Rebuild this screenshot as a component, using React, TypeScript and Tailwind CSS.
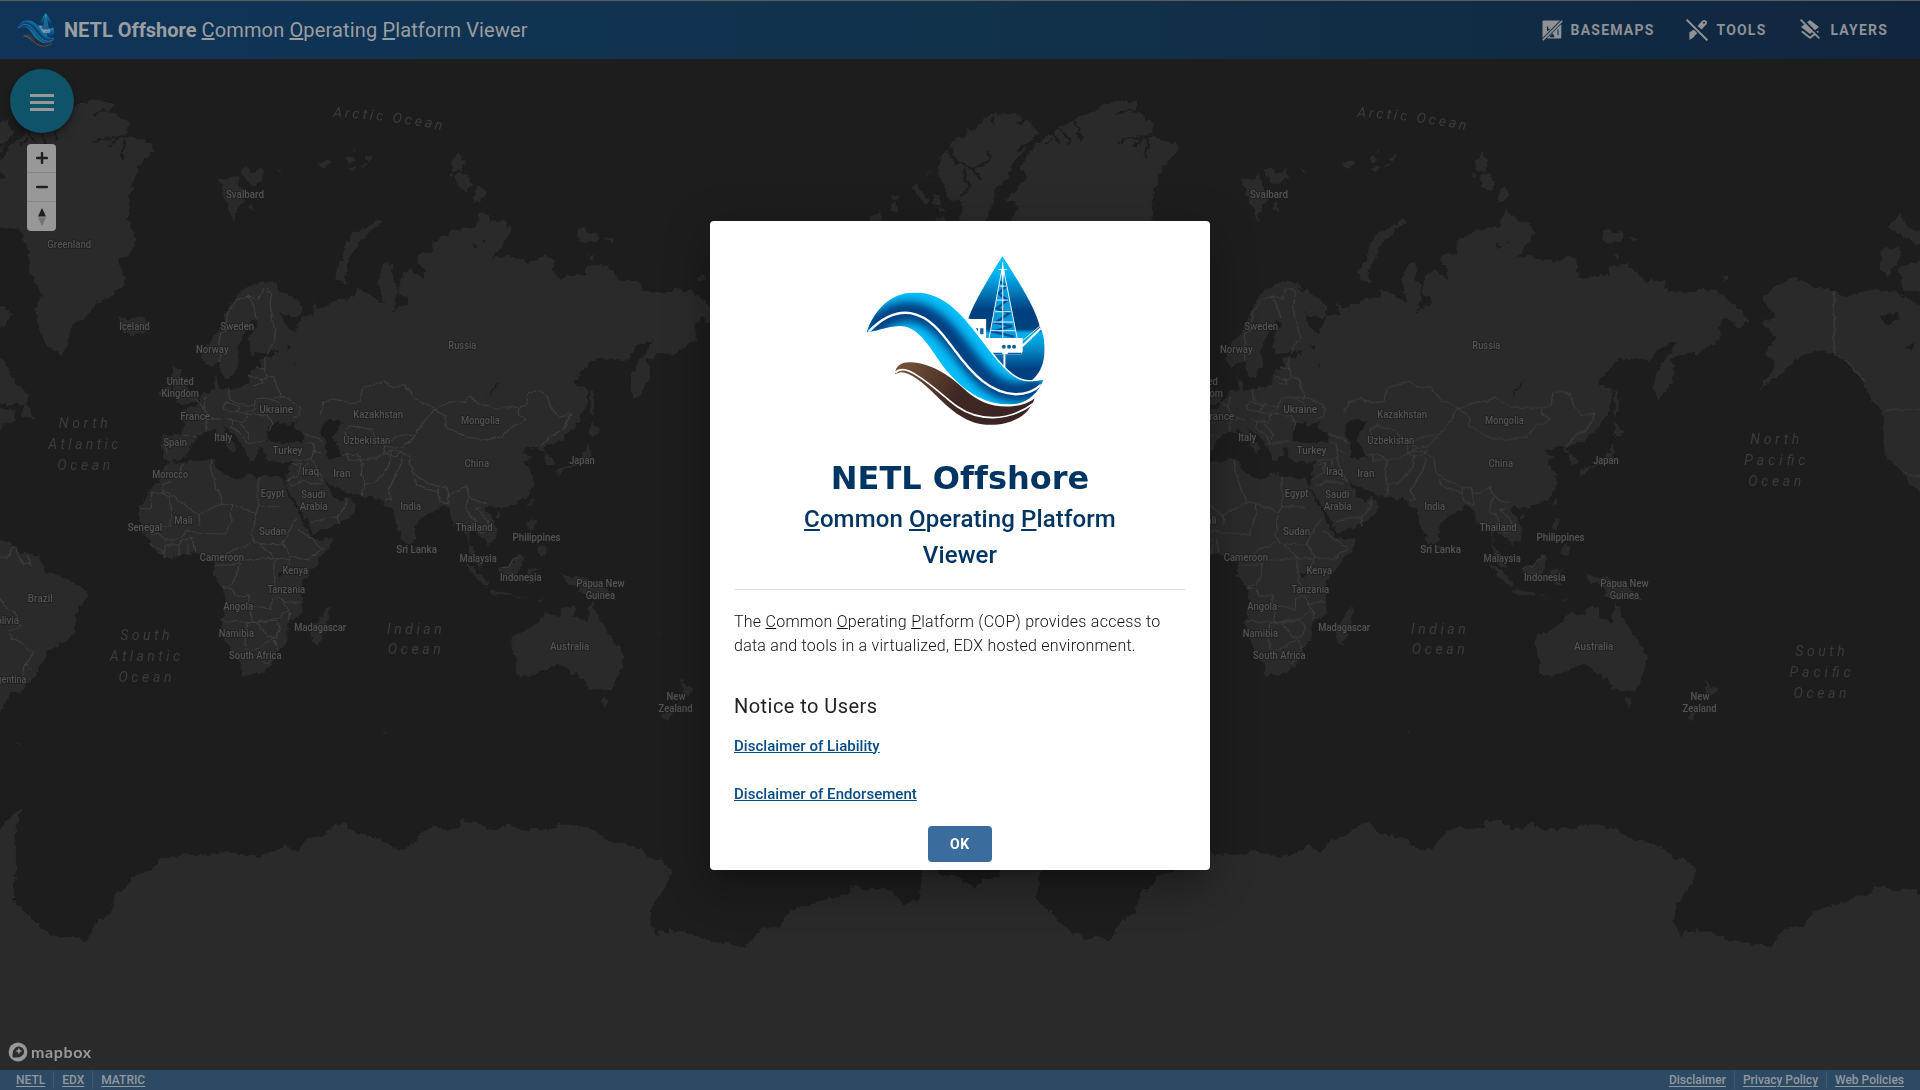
import React from "react";
import { MdLayersClear } from "react-icons/md";

/* ---------- map data: x is in 1/2.2085 px, y in 1/3 px below the header ---------- */

const UX = 0.45281;
const WORLD = 1024;

const LAND = [
  // Greenland
  "M-42 420L10 350L-9 320L28 250L65 215L109 180L153 155L180 130L205 120L250 130L245 155L288 190L275 225L335 250L340 270L305 320L290 380L282 470L298 540L290 580L262 600L275 665L265 690L215 730L185 780L160 790L155 830L140 888L110 865L90 820L78 750L95 710L68 640L60 560L40 505L0 498L-30 480L-10 440Z",
  // Iceland, Svalbard, Arctic islands
  "M263 770L285 778L315 768L330 790L325 808L297 828L270 815Z",
  "M482 355L505 360L520 345L530 380L540 420L525 440L517 485L500 430L488 395Z",
  "M530 330L545 322L560 340L580 325L582 355L560 378L540 360Z",
  "M548 440L562 458L558 425Z",
  "M703 312L722 300L732 305L720 318L712 330ZM762 300L775 288L785 302L770 310ZM765 325L785 318L778 335ZM795 315L812 308L800 325ZM808 295L822 282L822 298L812 306ZM775 268L782 266L780 276ZM612 330L622 330L618 336Z",
  "M1013 278L1025 305L1018 335L1000 335L995 305Z",
  "M1005 345L1030 340L1040 370L1030 395L1010 380ZM988 345L998 340L996 354Z",
  "M1058 375L1073 405L1060 420L1042 430Z",
  "M838 478L845 488L815 515L790 550L775 590L762 630L760 650L770 668L745 660L740 635L755 600L765 550L785 515L810 505Z",
  "M1278 508L1290 505L1300 520L1320 515L1322 540L1300 548L1280 545ZM1335 530L1358 542L1350 550ZM1298 582L1312 585L1310 597ZM1537 655L1555 645L1558 658L1545 662Z",
  // Eurasia
  "M460 920L447 900L452 860L480 820L497 770L510 730L530 695L570 665L605 668L612 690L645 705L670 740L665 770L640 772L618 755L632 800L650 818L655 800L668 770L695 765L690 722L703 750L745 720L790 710L785 683L805 695L847 728L835 660L850 610L868 612L865 650L878 680L872 740L860 765L880 740L900 735L898 710L880 705L885 650L905 625L935 660L938 630L922 605L922 585L955 580L955 545L1000 510L1050 500L1065 448L1085 480L1115 488L1128 515L1110 555L1085 598L1120 585L1165 605L1190 600L1198 585L1220 600L1225 640L1238 662L1250 645L1295 645L1293 620L1325 615L1350 630L1370 662L1415 665L1420 692L1470 700L1495 685L1530 695L1571 740L1601 775L1581 808L1551 770L1533 800L1540 840L1515 855L1490 882L1455 880L1430 900L1437 940L1420 990L1400 1022L1393 985L1395 940L1420 890L1445 840L1405 860L1380 905L1350 895L1310 900L1265 970L1300 990L1295 1040L1270 1100L1240 1140L1197 1162L1215 1190L1225 1205L1222 1215L1208 1215L1205 1180L1185 1160L1155 1170L1160 1185L1175 1190L1155 1205L1175 1240L1178 1270L1165 1310L1140 1330L1105 1345L1085 1340L1070 1345L1085 1370L1100 1405L1098 1430L1080 1455L1065 1435L1045 1410L1035 1410L1035 1450L1048 1475L1068 1525L1055 1520L1038 1480L1030 1420L1018 1390L1000 1395L993 1345L975 1335L965 1350L935 1370L917 1400L915 1440L905 1455L890 1445L875 1390L868 1350L850 1340L845 1320L800 1310L770 1300L750 1285L730 1275L716 1258L722 1275L735 1305L755 1325L768 1312L787 1340L775 1370L740 1395L688 1422L685 1400L660 1340L632 1280L635 1240L645 1205L620 1208L585 1198L582 1165L572 1162L570 1185L552 1202L540 1165L515 1120L500 1108L490 1100L520 1160L513 1182L495 1140L475 1110L455 1115L435 1130L420 1160L410 1190L380 1205L360 1195L358 1125L402 1122L408 1080L395 1060L430 1040L455 995L475 990L470 940L488 990L520 985L550 970L555 930L580 920L570 895L605 890L605 870L555 885L550 830L570 790L560 780L535 830L523 870L528 910L510 950L495 955L485 905Z",
  // Britain and Ireland
  "M385 915L400 930L398 960L425 1000L440 1015L425 1028L388 1034L402 1005L385 990L375 960Z",
  "M352 990L375 975L378 1005L354 1015Z",
  // Sakhalin and Japan
  "M1303 990L1312 1000L1313 1045L1310 1070L1305 1060ZM1306 1085L1325 1118L1308 1130L1302 1120Z",
  "M1298 1150L1305 1190L1285 1210L1250 1225L1235 1240L1230 1255L1228 1230L1260 1215L1280 1195L1295 1170Z",
  // South-east Asia
  "M1175 1310L1177 1330L1168 1340ZM1098 1355L1108 1365L1100 1380ZM1172 1375L1183 1378L1178 1410L1165 1405ZM1195 1450L1208 1465L1200 1488L1185 1475ZM915 1455L925 1470L915 1475Z",
  "M1100 1525L1125 1520L1145 1480L1158 1490L1150 1530L1135 1550L1105 1545Z",
  "M1028 1510L1045 1520L1080 1570L1075 1582L1050 1550Z",
  "M1078 1590L1130 1598L1130 1608L1085 1603ZM1190 1620L1205 1610L1192 1626ZM1135 1608L1165 1612L1135 1612Z",
  "M1165 1530L1195 1525L1170 1545L1185 1572L1170 1575Z",
  "M1238 1540L1262 1555L1290 1555L1325 1575L1340 1590L1370 1630L1340 1610L1310 1618L1285 1605L1280 1580L1250 1565Z",
  // Australia, Tasmania, New Zealand
  "M1130 1730L1165 1710L1185 1690L1205 1660L1235 1668L1240 1645L1270 1638L1268 1670L1297 1690L1303 1640L1308 1630L1328 1690L1350 1730L1372 1775L1378 1790L1365 1850L1350 1890L1325 1890L1300 1885L1290 1850L1278 1858L1275 1835L1265 1847L1250 1822L1230 1815L1190 1838L1150 1850L1138 1840L1140 1810L1130 1760Z",
  "M1325 1915L1345 1918L1335 1943Z",
  "M1502 1855L1515 1880L1532 1885L1520 1905L1508 1900ZM1500 1925L1490 1950L1475 1982L1462 1970L1485 1940ZM1447 1712L1458 1725L1452 1722ZM846 2013L854 2020L848 2020Z",
  // Africa and Madagascar
  "M375 1205L400 1210L470 1195L478 1230L500 1245L535 1260L545 1240L570 1250L625 1255L632 1290L655 1345L670 1390L690 1438L733 1435L730 1460L700 1510L670 1560L665 1580L668 1660L635 1690L635 1740L615 1770L600 1815L575 1840L535 1848L528 1810L505 1760L488 1690L500 1630L490 1580L470 1545L475 1510L455 1490L430 1480L400 1485L365 1495L340 1465L315 1420L312 1380L305 1345L325 1300L350 1265L358 1235Z",
  "M725 1640L728 1660L710 1740L700 1757L688 1745L690 1700L708 1670Z",
  // Eastern edge of the Americas
  "M-20 720L0 735L25 762L10 800L-20 790ZM-20 880L0 885L15 920L30 965L62 1000L60 1030L30 1035L-20 1035ZM55 1032L78 1075L45 1070ZM-20 1048L35 1045L35 1085L12 1090L0 1115L-20 1120Z",
  "M-40 1440L0 1443L25 1448L45 1480L88 1490L100 1535L150 1555L190 1590L192 1610L168 1660L165 1720L150 1740L108 1770L78 1850L45 1895L20 1895L20 1915L0 1960L-40 1960Z",
  "M33 2052L38 2048L42 2053L48 2049L44 2054Z",
  // Alaska and western Canada
  "M1656 680L1696 655L1751 680L1821 710L1871 685L1921 695L1990 745L2010 1325L1962 1280L1941 1235L1906 1195L1896 1140L1898 1060L1871 1020L1851 960L1800 885L1751 872L1711 890L1671 940L1626 988L1661 915L1636 880L1661 830L1630 790L1661 770L1631 720Z",
  "M1897 562L1941 570L1931 600L1906 650L1889 630ZM1931 620L1990 600L1990 700L1941 690ZM1908 500L1936 460L1950 500L1990 520L1990 560L1941 530Z",
].join("");

const WATER = [
  "M595 1100L610 1085L630 1095L645 1090L658 1080L648 1100L668 1118L674 1142L630 1150L600 1145L590 1135Z",
  "M708 1100L730 1078L757 1085L745 1112L735 1130L757 1192L740 1197L722 1190L722 1150L708 1122Z",
  "M1102 958L1100 980L1072 1020L1092 985Z",
  "M604 868L616 872L612 885ZM632 852L642 862L634 872ZM650 910L657 914L652 920ZM880 1095L886 1080L884 1092Z",
  "M612 1540L624 1535L622 1553L612 1552ZM1045 550L1055 556L1048 566ZM1066 540L1074 546L1068 550Z",
  "M1890 770L1930 755L1935 775L1905 798ZM1945 860L1970 845L1960 872Z",
].join("");

const INLETS =
  "M208 250L225 235L285 230M262 232L240 262M275 238L268 300M205 165L225 152L248 152M60 215L80 250M75 205L95 225L100 255M45 255L60 235M110 180L128 240";

const BORDERS = [
  "M708 1060L715 1025L740 1015L770 1028L795 1025L800 985L850 962L870 985L895 978L915 1015L930 1025L960 1045L930 1100L915 1125L880 1130L860 1145L835 1145L820 1110L780 1095L765 1105V1130",
  "M960 1045L1000 1025L1025 1028L1035 1010L1050 1022L1070 1035L1100 1045L1145 1042L1145 1065L1165 1078L1130 1100L1110 1130L1075 1140L1025 1130L985 1100L985 1070Z",
  "M1145 1042L1165 1035L1168 1000L1190 990L1208 1005L1215 1040L1235 1068L1260 1062L1245 1110L1220 1125L1195 1160",
  "M485 905L487 820L500 812L505 760L520 725L545 705L560 730L565 775M545 705L572 718L580 685L590 685L600 700L595 740L603 790L610 835L588 880",
  "M585 890L585 930L588 945L607 955L612 985L620 1005L615 1018M565 920L588 930M548 945L575 960L590 950M560 975L578 970L575 955M615 1010L600 1015L565 1015L560 1050L545 1055M620 1010L640 1020L665 1045L662 1065L645 1075",
  "M503 985L508 1020L540 1038L562 1040M490 1040L500 1025L530 1040L520 1055L495 1050ZM520 1055L545 1060L540 1085L515 1085L500 1075M545 1062L590 1065L600 1090L595 1115M515 1085L510 1100L530 1120L545 1150L560 1145L585 1145M530 1090L550 1120L548 1140M455 1010L450 1045L470 1075L490 1080M430 1020L452 1045M455 1115L455 1085L475 1070M402 1125L435 1132M365 1140L370 1190",
  "M668 1120L690 1130L705 1135L712 1150M675 1150L690 1150L695 1170L690 1195M690 1170L710 1180M645 1205L690 1195L700 1230L715 1265M645 1215L665 1210L660 1240L635 1265M680 1200L675 1230L690 1240L712 1265M755 1185L790 1182L800 1210L798 1245L805 1275L800 1305",
  "M765 1180L770 1200L800 1200L830 1195L860 1170L880 1175L905 1190M862 1178L860 1215L845 1245L825 1270L803 1272M888 1195L880 1235L855 1290L865 1320L850 1320M835 1145L870 1165L890 1160L915 1130M850 1155L845 1180L875 1190L890 1170",
  "M905 1195L910 1235L925 1255L965 1280L990 1285L990 1300L1010 1295L1030 1280L1035 1305L1060 1330L1075 1330M918 1260L920 1275L968 1298L965 1285M968 1298L972 1325L992 1335L990 1300M1035 1310L1028 1350L1050 1380L1040 1400M1050 1345L1070 1370L1085 1410L1060 1420M1045 1350L1065 1345",
  "M640 1275L670 1265L712 1272M685 1385L745 1370L762 1340L768 1320M745 1370L748 1395",
  "M468 1200L465 1230L475 1270L490 1330L440 1365L360 1290M402 1210L400 1245L360 1275V1300M360 1300H335V1345H308M360 1300L375 1310L378 1400H330M570 1250V1340H622M570 1340L565 1360L512 1330L490 1330M512 1330L510 1380L498 1425L470 1420L440 1420L415 1410L400 1430L385 1440M565 1360L555 1420L565 1450L620 1455L625 1440M440 1365V1395M555 1445L540 1460L515 1470L495 1490M570 1450L595 1480L605 1495L540 1500M655 1375L640 1410L625 1450L640 1490L680 1500L715 1465L690 1440L660 1410M605 1495H640L635 1535M605 1495L605 1560L615 1590L640 1580",
  "M365 1495L355 1470L330 1450M362 1485L365 1455L395 1455L395 1487M395 1460L400 1440L425 1435L430 1480M415 1450V1482M330 1425L350 1420L365 1440L385 1440M475 1515L515 1515V1510L528 1508L525 1545L510 1575L492 1578M492 1580L515 1590L520 1610L550 1605L550 1635L575 1640L600 1650L600 1615L620 1612L630 1630L665 1625M550 1635L555 1685L610 1675L635 1655M488 1682L555 1688L610 1680M545 1690L540 1765L555 1775L580 1755L605 1735M565 1685L590 1725L610 1735L620 1695L608 1680M605 1740L615 1775M580 1800L590 1810L600 1798M620 1612L640 1660L635 1685",
  "M0 1492L15 1495L30 1460M35 1465L50 1515L70 1510M60 1485L70 1515M0 1615L10 1640L35 1660L45 1700L20 1710L25 1735L45 1745L65 1770L75 1780L55 1810L70 1830M48 1850L55 1810",
  "M1100 1525L1125 1520L1135 1495L1150 1493M1789 695V885L1815 900L1858 965M1898 1051H1990M1941 1235L1990 1255M620 1030L600 1018",
].join("");

const ANTARCTICA =
  "M0 205L8 170L20 140L12 200L14 330L10 420L40 520L52 535L60 530L70 543L80 480L90 465L95 390L102 390L110 345L122 335L130 300L150 285L152 272L156 285L183 283L186 270L192 280L210 290L222 280L232 255L243 280L250 240L265 225L275 190L282 190L290 220L310 235L325 275L333 265L345 215L355 200L362 210L375 205L378 172L380 185L388 182L400 210L408 205L415 188L425 212L445 205L448 212L455 195L468 193L485 210L498 245L510 248L525 270L530 295L540 300L549 330L545 370L540 400L532 440L531 490L537 535L540 512L560 515L580 545L600 553L608 565L622 505L637 500L645 450L668 430L680 410L692 405L695 375L705 385L728 392L738 432L744 420L750 428L754 330L750 200L838 200V940H-20V205Z";

type Label = [string, number, number, number];

const COUNTRIES: Label[] = [
  ["Svalbard", 541, 402, 84], ["Greenland", 153, 552, 97], ["Iceland", 297, 798, 67],
  ["Sweden", 524, 798, 74], ["Norway", 469, 868, 72], ["Russia", 1021, 855, 62],
  ["United", 398, 963, 60], ["Kingdom", 398, 999, 83], ["France", 431, 1068, 66],
  ["Ukraine", 610, 1049, 75], ["Kazakhstan", 835, 1063, 110], ["Mongolia", 1061, 1081, 86],
  ["Italy", 493, 1133, 40], ["Spain", 387, 1146, 52], ["Turkey", 635, 1171, 66],
  ["Uzbekistan", 810, 1141, 104], ["China", 1053, 1209, 54], ["Japan", 1285, 1200, 56],
  ["Morocco", 376, 1242, 79], ["Iraq", 686, 1235, 38], ["Iran", 755, 1239, 38],
  ["Egypt", 602, 1300, 52], ["Saudi", 692, 1303, 53], ["Arabia", 693, 1339, 62],
  ["Mali", 405, 1382, 40], ["Senegal", 320, 1402, 76], ["India", 907, 1339, 46],
  ["Thailand", 1047, 1403, 82], ["Sudan", 602, 1414, 60], ["Philippines", 1185, 1433, 106],
  ["Sri Lanka", 920, 1468, 90], ["Cameroon", 490, 1492, 98], ["Malaysia", 1056, 1495, 82],
  ["Kenya", 652, 1530, 56], ["Indonesia", 1150, 1553, 92], ["Tanzania", 632, 1587, 84],
  ["Papua New", 1326, 1571, 107], ["Guinea", 1326, 1607, 65], ["Angola", 526, 1638, 66],
  ["Namibia", 522, 1719, 78], ["Madagascar", 707, 1702, 114], ["Australia", 1258, 1760, 87],
  ["South Africa", 564, 1786, 116], ["New", 1493, 1909, 42], ["Zealand", 1492, 1945, 75],
  ["Brazil", 89, 1615, 55], ["Bolivia", 10, 1680, 64], ["Argentina", 15, 1857, 86],
];

const OCEANS: Label[] = [
  ["North", 184, 1090, 108], ["Atlantic", 184, 1153, 155], ["Ocean", 185, 1217, 117],
  ["South", 320, 1725, 109], ["Atlantic", 320, 1788, 155], ["Ocean", 320, 1852, 117],
  ["Indian", 915, 1707, 121], ["Ocean", 915, 1769, 117],
  ["North", 1658, 1139, 108], ["Pacific", 1658, 1202, 135], ["Ocean", 1658, 1265, 117],
  ["South", 1758, 1774, 109], ["Pacific", 1758, 1838, 135], ["Ocean", 1758, 1901, 117],
];

/* Labels are laid out for both copies of the world; those fully behind the dialog are left out. */
function place(labels: Label[]) {
  return labels.flatMap(([text, cx, cy, w]) =>
    [0, WORLD].flatMap((shift) => {
      const x = cx * UX + shift;
      const y = 60 + cy / 3;
      const half = (w * UX) / 2;
      const covered = y > 215 && y < 870 && x - half > 706 && x + half < 1214;
      return covered || x - half > 1920 ? [] : [{ text, x, y, w: w * UX }];
    }),
  );
}

function WorldMap() {
  return (
    <svg className="absolute inset-0 h-[1090px] w-[1920px]" viewBox="0 0 1920 1090" aria-hidden="true">
      <defs>
        <filter id="coast" filterUnits="userSpaceOnUse" x="-20" y="0" width="1960" height="1090">
          <feTurbulence type="fractalNoise" baseFrequency="0.16" numOctaves="3" seed="4" />
          <feDisplacementMap in="SourceGraphic" scale="7" xChannelSelector="R" yChannelSelector="G" />
        </filter>
        <g id="world">
          <g transform={`translate(0 60) scale(${UX} 0.33333)`}>
            <path d={LAND} fill="#2c2c2b" />
            <path d={WATER} fill="#1d1d1d" />
            <path d={INLETS} fill="none" stroke="#1d1d1d" strokeWidth="5" />
          </g>
          <g transform="translate(-324 80) scale(0.33333)">
            <path
              fill="#2c2c2b"
              d="M1012 155L990 122L940 105L880 98L850 115L830 150L800 146L800 170L765 178L750 200L765 235L790 250L768 258L740 208L720 232L713 290L735 320L745 358L785 362L790 390L770 430L860 430L862 400L880 370L890 320L925 290L940 250L1000 180ZM635 318L650 315L690 370L670 374ZM700 338L720 350L718 374L702 372ZM570 375L590 368L596 388L575 396ZM573 352L592 342L600 356L575 358ZM508 412L540 394L546 420L510 430ZM682 275L690 277L688 295ZM712 380L730 382L735 392L715 392ZM708 412L735 412L735 426L710 426Z"
            />
            <path
              fill="none"
              stroke="#1d1d1d"
              strokeWidth="8"
              d="M745 205L770 245L820 265L865 245L868 212M790 265L795 300L812 320L785 350M820 265L842 300M875 110L885 132M950 130L980 115M950 215L1000 180"
            />
          </g>
          <g transform="translate(0 760) scale(1.22449 0.33333)">
            <path d={ANTARCTICA} fill="#2c2c2b" />
            <path d="M765 320L768 345L780 350L797 388L803 360L815 350L822 368V320Z" fill="#1d1d1d" />
          </g>
        </g>
        <g id="borders" transform={`translate(0 60) scale(${UX} 0.33333)`}>
          <path d={BORDERS} fill="none" stroke="#3e3f40" strokeWidth="2.6" strokeLinejoin="round" />
        </g>
        <filter id="wobble" filterUnits="userSpaceOnUse" x="-20" y="0" width="1960" height="1090">
          <feTurbulence type="fractalNoise" baseFrequency="0.12" numOctaves="2" seed="9" />
          <feDisplacementMap in="SourceGraphic" scale="5" xChannelSelector="R" yChannelSelector="G" />
        </filter>
        <path id="arctic-arc" d="M333 117Q390 119 456 133" />
      </defs>
      <rect width="1920" height="1090" fill="#1d1d1d" />
      <g filter="url(#coast)">
        <use href="#world" />
        <use href="#world" x={WORLD} />
        <rect x="-20" y="1000" width="1960" height="90" fill="#2c2c2b" />
      </g>
      <g filter="url(#wobble)">
        <use href="#borders" />
        <use href="#borders" x={WORLD} />
      </g>
      <g
        fill="#525354"
        stroke="#1f1f1f"
        strokeWidth="1.6"
        paintOrder="stroke"
        fontFamily="Roboto, sans-serif"
        fontSize="10.4"
        fontWeight="500"
        textAnchor="middle"
      >
        {place(COUNTRIES).map((l, i) => (
          <text key={i} x={l.x} y={l.y + 3.7} textLength={l.w} lengthAdjust="spacingAndGlyphs">
            {l.text}
          </text>
        ))}
      </g>
      <g fill="#3a3b3c" fontFamily="Roboto, sans-serif" fontSize="14" fontStyle="italic" textAnchor="middle">
        {place(OCEANS).map((l, i) => (
          <text key={i} x={l.x} y={l.y + 4.5} textLength={l.w}>
            {l.text}
          </text>
        ))}
        {[0, WORLD].map((s) => (
          <text key={s} transform={`translate(${s} 0)`} textAnchor="start" letterSpacing="2.95">
            <textPath href="#arctic-arc">Arctic Ocean</textPath>
          </text>
        ))}
      </g>
    </svg>
  );
}

function CopLogo({ id, className }: { id: string; className: string }) {
  const u = (n: string) => `url(#${id}-${n})`;
  return (
    <svg className={className} viewBox="490 129 580 522" aria-hidden="true">
      <defs>
        <linearGradient id={`${id}-drop`} x1="0" y1="0" x2="0" y2="1">
          <stop offset="0" stopColor="#05c3ff" />
          <stop offset="0.15" stopColor="#02b2f0" />
          <stop offset="0.42" stopColor="#004080" />
          <stop offset="0.57" stopColor="#00417f" />
          <stop offset="0.6" stopColor="#03b0ec" />
          <stop offset="0.67" stopColor="#02a0de" />
          <stop offset="0.88" stopColor="#004080" />
        </linearGradient>
        <linearGradient id={`${id}-mud`} x1="0" y1="0" x2="1" y2="0.3">
          <stop offset="0" stopColor="#7a563b" />
          <stop offset="0.55" stopColor="#3f2823" />
          <stop offset="1" stopColor="#3a2422" />
        </linearGradient>
        <clipPath id={`${id}-wave`}>
          <path d="M498 367C520 300 570 247 642 247C735 247 790 320 850 400C900 467 940 515 985 515C1000 515 1015 512 1029 510C1010 555 975 584 925 584C850 584 790 540 745 490C700 440 665 350 600 348C565 348 535 362 498 367Z" />
        </clipPath>
        <clipPath id={`${id}-dropclip`}>
          <path d="M906 138C940 190 1010 300 1018 350C1030 370 1035 400 1032 435C1028 470 1015 495 990 515L930 500L860 430L803 327C825 265 880 180 906 138Z" />
        </clipPath>
        <filter id={`${id}-soft`} x="-0.2" y="-0.2" width="1.4" height="1.4">
          <feGaussianBlur stdDeviation="13" />
        </filter>
      </defs>
      <g clipPath={u("dropclip")}>
        <rect x="795" y="135" width="245" height="390" fill={u("drop")} />
        <path d="M902 185L866 384H950L914 185Z" fill="#059bdb" />
        <path d="M899 215L917 228L894 250L921 270L889 295L926 310L884 338L935 348L876 365L940 380" fill="none" stroke="#004f91" strokeWidth="7" />
        <path
          d="M904 180L866 384M910 180L950 384M907 155V384M894 178H920M897 228H918M890 270H924M884 305H930M878 336H938M872 362H944"
          fill="none"
          stroke="#e4f6ff"
          strokeWidth="3"
        />
        <path d="M907 160L912 185L907 215L902 185Z" fill="#fff" />
        <path d="M795 327H857V384H967V424L963 433H915V475H909V433H860L795 350Z" fill="#fff" />
        <path d="M825 355H833V370H828ZM839 355H849V373H839Z" fill="#0a66a6" />
        <circle cx="910" cy="410" r="6" fill="#0a5fa0" />
        <circle cx="926" cy="410" r="6" fill="#0a5fa0" />
        <circle cx="941" cy="410" r="6" fill="#0a5fa0" />
        <path d="M877 430H905M922 430H963" stroke="#0a5fa0" strokeWidth="4" />
        <path d="M966 408L1022 354" stroke="#fff" strokeWidth="7" />
        <path d="M964 394L1020 347" stroke="#dff4ff" strokeWidth="3" />
      </g>
      <path
        d="M803 327L850 400C900 467 940 515 985 515C1000 515 1015 512 1029 510"
        fill="none"
        stroke="#fff"
        strokeWidth="9"
      />
      <g clipPath={u("wave")}>
        <rect x="490" y="240" width="550" height="350" fill="#06bdfa" />
        <path
          d="M505 362C545 322 590 303 635 306C705 316 745 375 785 425C830 485 875 542 945 546C975 548 1000 540 1025 522"
          fill="none"
          stroke="#004181"
          strokeWidth="62"
          filter={u("soft")}
        />
        <path
          d="M504 365C545 322 585 303 630 309C690 320 725 370 765 424C815 492 870 550 945 553C975 553 1000 545 1022 525"
          fill="none"
          stroke="#fff"
          strokeWidth="7"
        />
      </g>
      <path
        d="M583 492C585 465 605 456 630 457C690 460 745 495 785 532C830 575 870 592 930 590C960 588 985 580 1003 565C985 620 930 645 870 645C800 645 750 600 705 555C665 515 625 485 600 487Z"
        fill={u("mud")}
      />
      <path
        d="M584 488C600 472 625 480 650 497C700 528 735 565 770 590C830 632 920 640 1000 580"
        fill="none"
        stroke="#fff"
        strokeWidth="5"
      />
    </svg>
  );
}

function BasemapOffIcon() {
  return (
    <svg className="size-[21px]" viewBox="0 0 21 21" aria-hidden="true">
      <path d="M1.5 0.5H18L0.5 18V1.5Q0.5 0.5 1.5 0.5Z" fill="currentColor" />
      <path d="M19.3 4V17.5Q19.3 18.6 18.2 18.6H4.7Z" fill="currentColor" />
      <path d="M5.6 6.5V10.2L7.6 9" fill="none" stroke="#11283f" strokeWidth="1.2" />
      <path d="M8 16.8L10.5 13.8L12 16.8ZM16 9.5V15" fill="#11283f" stroke="#11283f" strokeWidth="1" />
      <path d="M0.8 20.2L20.2 0.8" stroke="currentColor" strokeWidth="1.7" />
    </svg>
  );
}

function ToolsOffIcon() {
  return (
    <svg className="size-[22px]" viewBox="0 0 22 22" aria-hidden="true">
      <path d="M11.5 7L16 2Q18 0 20 1.6Q22 3.4 20.3 5.6L15.6 10.6Z" fill="currentColor" />
      <circle cx="18" cy="3.8" r="1" fill="#11283f" />
      <path d="M8.5 10.2L12 13.8L8.8 16.5L7.8 18.2L3.4 21V13.2Z" fill="currentColor" />
      <path d="M0.8 0.8L21.2 21.2" stroke="#11283f" strokeWidth="4" />
      <path d="M0.6 0.6L21.4 21.4" stroke="currentColor" strokeWidth="2" />
    </svg>
  );
}

function MapboxMark() {
  return (
    <div className="flex items-center gap-[3px] text-[#989898]">
      <svg className="size-[20px]" viewBox="0 0 20 20" aria-hidden="true">
        <circle cx="10" cy="10" r="9.4" fill="currentColor" />
        <path d="M4.6 15.4Q4.2 9.5 6.3 6.9A5.3 5.3 0 1 1 13.6 14.2Q10.8 16 4.6 15.4Z" fill="#2b2b2a" />
        <path d="M10.9 5.6L11.9 8.1L14.4 9.1L11.9 10.1L10.9 12.6L9.9 10.1L7.4 9.1L9.9 8.1Z" fill="currentColor" />
      </svg>
      <span className="-mt-px font-['Lato'] text-[16px] leading-5 font-bold tracking-[0.65px]">mapbox</span>
    </div>
  );
}

function NavItem({ icon, label }: { icon: React.ReactNode; label: string }) {
  return (
    <button className="flex items-center text-[#8f9194]">
      {icon}
      <span className="ml-2 text-sm leading-5 font-bold tracking-[1.2px]">{label}</span>
    </button>
  );
}

function FooterLinks({ links }: { links: string[] }) {
  return (
    <div className="flex items-center divide-x divide-[#3f5b74]">
      {links.map((l) => (
        <a key={l} className="px-2 text-xs leading-[18px] font-medium underline underline-offset-2">
          {l}
        </a>
      ))}
    </div>
  );
}

function ProductName() {
  return (
    <>
      <u>C</u>ommon <u>O</u>perating <u>P</u>latform
    </>
  );
}

export default function App() {
  return (
    <div className="relative flex h-[1090px] w-[1920px] flex-col overflow-hidden bg-[#1d1d1d] font-['Roboto',sans-serif]">
      <WorldMap />

      <header className="relative flex h-[59px] shrink-0 items-center border-t border-[#5c5c5c] bg-gradient-to-r from-[#0f3458] via-[#11324b] to-[#10263f] pr-8 pl-[17px]">
        <CopLogo id="mini" className="h-[36px] w-[40px] opacity-50" />
        <h1 className="ml-[7px] text-[20px] leading-8 text-[#9b9ea1]">
          <b className="font-bold">NETL Offshore</b>{" "}
          <span className="tracking-[0.14px]">
            <ProductName /> Viewer
          </span>
        </h1>
        <nav className="ml-auto flex items-center gap-8">
          <NavItem icon={<BasemapOffIcon />} label="BASEMAPS" />
          <NavItem icon={<ToolsOffIcon />} label="TOOLS" />
          <NavItem icon={<MdLayersClear className="size-[24px]" />} label="LAYERS" />
        </nav>
      </header>

      <main className="relative flex flex-1 flex-col items-start px-2 pt-[10px]">
        <button className="ml-[2px] flex size-16 flex-col items-center justify-center gap-1 rounded-full bg-[#0f5369] pt-[3px] shadow-[0_3px_5px_-1px_rgba(0,0,0,.3),0_6px_10px_rgba(0,0,0,.25)]">
          <i className="h-[3px] w-6 bg-[#989898]" />
          <i className="h-[3px] w-6 bg-[#989898]" />
          <i className="h-[3px] w-6 bg-[#989898]" />
        </button>
        <div className="mt-[11px] ml-[19px] w-[29px] divide-y divide-[#858585] overflow-hidden rounded bg-[#989898]">
          <button className="flex h-[29px] w-full items-center justify-center">
            <svg className="size-3" viewBox="0 0 12 12">
              <path d="M6 1V11M1 6H11" stroke="#1f1f1f" strokeWidth="2.4" strokeLinecap="round" />
            </svg>
          </button>
          <button className="flex h-[29px] w-full items-center justify-center">
            <svg className="size-3" viewBox="0 0 12 12">
              <path d="M1 6H11" stroke="#1f1f1f" strokeWidth="2.4" strokeLinecap="round" />
            </svg>
          </button>
          <button className="flex h-[29px] w-full items-center justify-center">
            <svg className="h-5 w-3" viewBox="0 0 12 20">
              <path d="M6 1L10 9.5H2Z" fill="#1f1f1f" />
              <path d="M6 19L10 10.5H2Z" fill="#737373" />
            </svg>
          </button>
        </div>
        <div className="mt-auto mb-2">
          <MapboxMark />
        </div>
      </main>

      <footer className="relative flex h-5 shrink-0 items-center justify-between bg-[#2c4a64] px-2 text-[#93989c]">
        <FooterLinks links={["NETL", "EDX", "MATRIC"]} />
        <FooterLinks links={["Disclaimer", "Privacy Policy", "Web Policies"]} />
      </footer>

      <div className="absolute inset-0 flex items-center justify-center">
        <section
          role="dialog"
          className="flex h-[649px] w-[500px] flex-col items-center rounded bg-white px-6 pt-8 shadow-[0_11px_15px_-7px_rgba(0,0,0,.2),0_24px_38px_3px_rgba(0,0,0,.14),0_9px_46px_8px_rgba(0,0,0,.12)]"
        >
          <CopLogo id="main" className="h-[174px] w-[193px] shrink-0" />
          <h2 className="mt-[31px] font-['DejaVu_Sans'] text-[32px] leading-[40px] font-bold whitespace-nowrap text-[#003462] [font-variant-ligatures:none]">
            NETL Offshore
          </h2>
          <p className="mt-[3px] w-[340px] text-center text-2xl leading-[36px] font-medium tracking-[0.12px] text-[#003462]">
            <ProductName /> Viewer
          </p>
          <hr className="mt-4 w-[450px] border-[#dedede]" />
          <p className="mt-5 w-full text-base leading-6 font-light tracking-[0.25px] text-[#111]">
            The <ProductName /> (COP) provides access to data and tools in a virtualized, EDX hosted environment.
          </p>
          <h3 className="mt-8 w-full text-xl leading-8 tracking-[0.45px] text-[#222]">Notice to Users</h3>
          <div className="mt-3 flex w-full flex-col gap-6 text-[15px] leading-6 font-medium tracking-[0.04px] text-[#064a86]">
            <a className="underline">Disclaimer of Liability</a>
            <a className="underline">Disclaimer of Endorsement</a>
          </div>
          <button className="mt-5 h-9 w-16 shrink-0 rounded bg-[#3a6d9e] text-sm font-bold tracking-[0.6px] text-white">
            OK
          </button>
        </section>
      </div>
    </div>
  );
}
